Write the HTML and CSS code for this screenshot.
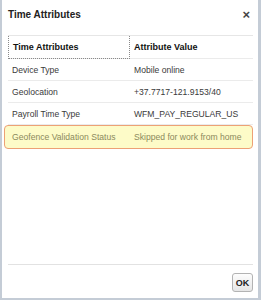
FILE: index.html
```html
<!DOCTYPE html>
<html lang="en">
<head>
  <meta charset="UTF-8" />
  <title>Time Attributes</title>
  <link rel="stylesheet" href="styles.css">
</head>
<body>
  <div class="dialog">
    <div class="dialog-header">
      <h1>Time Attributes</h1>
      <span class="close-btn">&times;</span>
    </div>

    <div class="dialog-body">
      <div class="attr-table">
        <div class="row head-row">
          <div class="cell focused">Time Attributes</div>
          <div class="cell">Attribute Value</div>
        </div>
        <div class="row">
          <div class="cell">Device Type</div>
          <div class="cell">Mobile online</div>
        </div>
        <div class="row">
          <div class="cell">Geolocation</div>
          <div class="cell">+37.7717-121.9153/40</div>
        </div>
        <div class="row">
          <div class="cell">Payroll Time Type</div>
          <div class="cell">WFM_PAY_REGULAR_US</div>
        </div>
        <div class="row highlight">
          <div class="cell">Geofence Validation Status</div>
          <div class="cell">Skipped for work from home</div>
        </div>
      </div>
    </div>

    <div class="dialog-footer">
      <button class="ok-button">OK</button>
    </div>
  </div>
</body>
</html>
```

FILE: styles.css
```css
* {
  box-sizing: border-box;
}

body {
  margin: 0;
  font-family: 'Liberation Sans', Arial, sans-serif;
  background-color: #fff;
  color: #3a3a3a;
}

.dialog {
  width: 261px;
  height: 300px;
  display: flex;
  flex-direction: column;
  background-color: #fff;
  border-left: 2px solid #c4ccd6;
  border-right: 3px solid #c4ccd6;
  border-bottom: 2px solid #c4ccd6;
}

.dialog-header {
  height: 28px;
  display: flex;
  align-items: center;
  justify-content: space-between;
  padding: 0 8px 0 6px;
}

.dialog-header h1 {
  margin: 0;
  font-size: 10px;
  font-weight: bold;
  color: #222;
}

.close-btn {
  font-size: 13px;
  font-weight: bold;
  color: #444;
  line-height: 1;
}

.dialog-body {
  flex: 1;
  padding: 7px 5px 0 6px;
}

.attr-table {
  border-top: 1px solid #e6e6e6;
  font-size: 8.6px;
}

.row {
  display: grid;
  grid-template-columns: 122px 1fr;
  height: 22px;
  align-items: center;
  border-bottom: 1px solid #ebebeb;
}

.cell {
  padding: 0 4px;
  white-space: nowrap;
}

.head-row {
  height: 23px;
  font-size: 9px;
  font-weight: bold;
  color: #111;
  align-items: stretch;
}

.head-row .cell {
  display: flex;
  align-items: center;
}

.focused {
  border-left: 1px dotted #8a8a8a;
  border-right: 1px dotted #8a8a8a;
  border-bottom: 1px dotted #8a8a8a;
  margin-bottom: -1px;
}

.highlight {
  height: 24px;
  margin-left: -4px;
  padding-left: 3px;
  border: 1px solid #eda175;
  border-radius: 4px;
  background-color: #fdfbc8;
  color: #8c8a5c;
}

.dialog-footer {
  margin: 0 5px 0 6px;
  padding: 8px 0 6px;
  border-top: 1px solid #e2e2e2;
  display: flex;
  justify-content: flex-end;
}

.ok-button {
  width: 21px;
  height: 19px;
  padding: 0;
  font-family: 'Liberation Sans', Arial, sans-serif;
  font-size: 9px;
  font-weight: bold;
  color: #222;
  background: linear-gradient(#fdfdfd, #e6e6e6);
  border: 1px solid #b3b3b3;
  border-radius: 3px;
}
```
